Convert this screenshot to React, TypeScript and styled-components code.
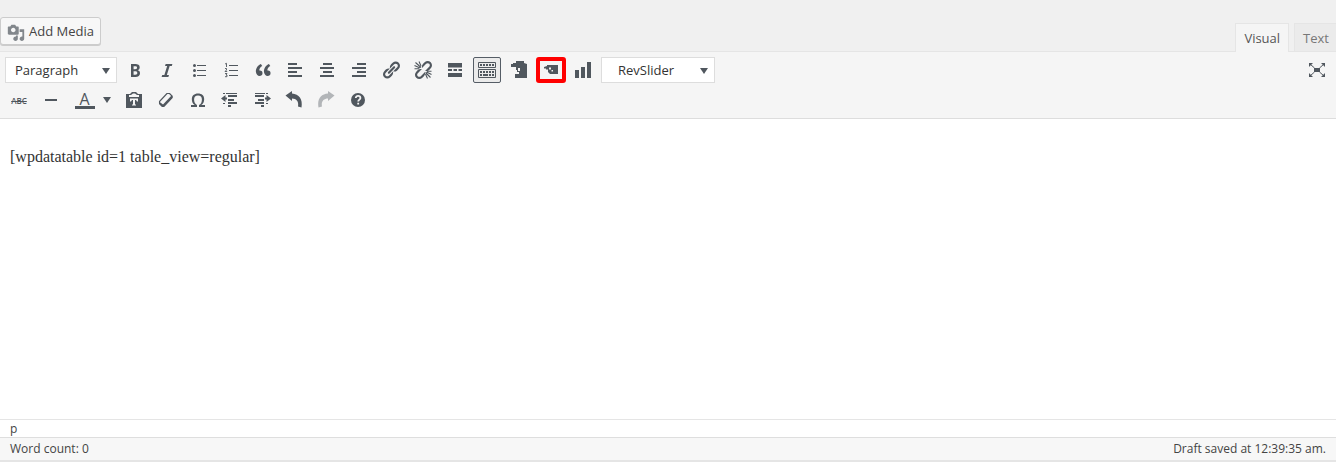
import React, { useState } from 'react';
import styled, { createGlobalStyle, css } from 'styled-components';

const Global = createGlobalStyle`
  * { box-sizing: border-box; }
  body { margin: 0; background: #f0f0f0; }
  button, select { font: inherit; }
`;

const Editor = styled.section`
  min-height: 100vh;
  display: flex;
  flex-direction: column;
  font-family: "Open Sans", "Noto Sans", sans-serif;
  font-size: 12px;
  color: #444;
`;

const Header = styled.header`
  display: flex;
  justify-content: space-between;
  align-items: flex-start;
  height: 52px;
  padding-top: 17px;
  border-bottom: 1px solid #e5e5e5;
`;

const MediaButton = styled.button`
  display: flex;
  align-items: center;
  gap: 3px;
  height: 28px;
  padding: 0 6px 0 5px;
  border: 1px solid #ccc;
  border-radius: 3px;
  background: #f7f7f7;
  box-shadow: 0 1px 0 #ccc;
  color: #444;
  font-size: 13px;
  cursor: pointer;
`;

const Tabs = styled.div`
  display: flex;
  gap: 5px;
  padding-top: 6px;
`;

const Tab = styled.button<{ $active?: boolean }>`
  height: ${p => (p.$active ? 29 : 28)}px;
  padding: 0 8px;
  border: 1px solid #e5e5e5;
  border-bottom: 0;
  background: ${p => (p.$active ? '#f5f5f5' : '#ebebeb')};
  color: ${p => (p.$active ? '#555' : '#777')};
  font-size: 13px;
  line-height: 26px;
  cursor: pointer;
  &:last-child { padding-right: 7px; border-right: 0; }
`;

const Toolbar = styled.div`
  display: flex;
  flex-direction: column;
  gap: 2px;
  padding: 4px 5px;
  background: #f5f5f5;
  border-bottom: 1px solid #ddd;
`;

const ToolRow = styled.div`
  display: flex;
  align-items: center;
  gap: 4px;
  height: 28px;
`;

const SelectBox = styled.div<{ $width: number; $indent: number }>`
  position: relative;
  width: ${p => p.$width}px;
  height: 26px;
  select {
    appearance: none;
    width: 100%;
    height: 100%;
    padding: 0 18px 0 ${p => p.$indent}px;
    border: 1px solid #ddd;
    border-radius: 0;
    background: #fff;
    color: #333;
    font-size: 13px;
  }
  svg { position: absolute; right: 7px; top: 11px; pointer-events: none; }
`;

const ToolButton = styled.button<{ $pressed?: boolean; $marked?: boolean; $wide?: boolean }>`
  display: flex;
  align-items: center;
  justify-content: center;
  flex: none;
  width: ${p => (p.$wide ? 47 : 28)}px;
  height: 28px;
  padding: 0;
  border: 0;
  border-radius: 2px;
  background: transparent;
  color: #50575e;
  cursor: pointer;
  &:disabled { opacity: 0.4; cursor: default; }
  ${p => p.$pressed && css`
    height: 26px;
    border: 1px solid #555d66;
    background: #ebebeb;
  `}
  ${p => p.$marked && css`
    height: 24px;
    outline: 4px solid #f00;
    outline-offset: -3px;
  `}
`;

const Spacer = styled.span`
  flex: 1;
`;

const Canvas = styled.main`
  flex: 1;
  padding: 26px 10px;
  background: #fff;
  color: #333;
  font: 16px/24px "Liberation Serif", serif;
  outline: 0;
  p { margin: 0; }
`;

const PathBar = styled.div`
  height: 18px;
  padding: 0 10px;
  border-top: 1px solid #e5e5e5;
  background: #fff;
  line-height: 18px;
`;

const StatusBar = styled.footer`
  display: flex;
  justify-content: space-between;
  height: 25px;
  padding: 0 10px;
  border-top: 1px solid #dedede;
  border-bottom: 2px solid #e5e5e5;
  background: #f7f7f7;
  line-height: 22px;
`;

const Svg = ({ children }: { children: React.ReactNode }) => (
  <svg width="20" height="20" viewBox="0 0 20 20" fill="currentColor" aria-hidden="true">{children}</svg>
);

const Arrow = () => (
  <svg width="8" height="6" viewBox="0 0 8 6" fill="#50575e" aria-hidden="true"><path d="M0 0h8L4 6z" /></svg>
);

const icons: Record<string, React.ReactNode> = {
  bold: <path d="M6 4v13h4.540c1.370 0 2.460-.33 3.260-1 .8-.66 1.200-1.580 1.200-2.770 0-.84-.17-1.510-.51-2.010s-.9-.85-1.670-1.030v-.09c.57-.1 1.020-.4 1.360-.9s.51-1.130.51-1.910c0-1.140-.39-1.980-1.170-2.500C12.750 4.260 11.500 4 9.780 4H6zm2.570 5.150V6.260h1.360c.73 0 1.270.11 1.610.32.34.22.51.58.51 1.070 0 .54-.16.92-.47 1.150s-.82.35-1.510.35h-1.500zm0 2.190h1.600c1.440 0 2.160.53 2.160 1.610 0 .6-.17 1.050-.51 1.340s-.86.43-1.570.43H8.570v-3.380z" />,
  italic: <path d="M14.780 6h-2.130l-2.800 9h2.120l-.62 2H4.600l.62-2h2.140l2.800-9H8.030l.62-2h6.750z" />,
  ul: <path d="M5.500 7a1.500 1.500 0 1 1 0-3 1.500 1.500 0 0 1 0 3zM8 5h9v1H8zM5.500 12a1.500 1.500 0 1 1 0-3 1.500 1.500 0 0 1 0 3zM8 10h9v1H8zM5.500 17a1.500 1.500 0 1 1 0-3 1.500 1.500 0 0 1 0 3zM8 15h9v1H8z" />,
  ol: (
    <>
      <path d="M8 5h9v1H8zM8 10h9v1H8zM8 15h9v1H8z" />
      <path d="M4 4L5.500 3.300V7M4 8.500h1.500v1.500L4 11.500h2.200M4 13.500h2L5 15h1v1.700H4" fill="none" stroke="currentColor" strokeWidth=".9" />
    </>
  ),
  quote: <path d="M9.490 13.220c0-.74-.2-1.380-.61-1.900-.62-.78-1.830-.88-2.530-.72-.29-1.650 1.110-3.750 2.920-4.650L7.880 4c-2.730 1.300-5.420 4.280-4.960 8.050C3.210 14.430 4.590 16 6.540 16c.85 0 1.560-.25 2.120-.75s.83-1.180.83-2.030zm8.050 0c0-.74-.2-1.380-.61-1.900-.63-.78-1.830-.88-2.530-.72-.29-1.650 1.110-3.750 2.920-4.650L15.930 4c-2.730 1.300-5.410 4.280-4.950 8.050.29 2.380 1.660 3.950 3.610 3.950.85 0 1.560-.25 2.120-.75s.83-1.180.83-2.030z" />,
  left: <path d="M3 3h9v2H3zM3 7h14v2H3zM3 11h9v2H3zM3 15h14v2H3z" />,
  center: <path d="M6 3h9v2H6zM3 7h14v2H3zM6 11h9v2H6zM3 15h14v2H3z" />,
  right: <path d="M8 3h9v2H8zM3 7h14v2H3zM8 11h9v2H8zM3 15h14v2H3z" />,
  link: <path d="M17.740 2.760c1.680 1.690 1.680 4.410 0 6.100l-1.530 1.520c-1.120 1.120-2.700 1.470-4.140 1.090l2.620-2.610.76-.77.76-.76c.84-.84.84-2.200 0-3.040-.84-.85-2.200-.85-3.040 0l-.77.76-3.380 3.380c-.37-1.440-.02-3.020 1.100-4.140l1.520-1.530c1.690-1.680 4.420-1.680 6.100 0zM8.590 13.430l5.340-5.340c.42-.42.42-1.100 0-1.520-.44-.43-1.130-.39-1.530 0l-5.330 5.340c-.42.42-.42 1.100 0 1.520.44.43 1.130.39 1.520 0zm-.76 2.290l4.140-4.150c.38 1.440.03 3.020-1.090 4.140l-1.520 1.530c-1.690 1.680-4.410 1.680-6.100 0-1.680-1.680-1.680-4.420 0-6.100l1.530-1.520c1.120-1.120 2.700-1.470 4.140-1.100l-4.140 4.150c-.85.84-.85 2.200 0 3.050.84.84 2.200.84 3.040 0z" />,
  unlink: (
    <>
      <path d="M17.740 2.260c1.680 1.690 1.680 4.410 0 6.100l-1.530 1.520c-1.120 1.120-2.700 1.470-4.140 1.090l2.620-2.610 1.520-1.530c.84-.84.84-2.200 0-3.040-.84-.85-2.200-.85-3.040 0l-.77.76-3.380 3.380c-.37-1.440-.02-3.020 1.100-4.140l1.520-1.530c1.690-1.680 4.420-1.680 6.100 0zM7.830 16.220l4.140-4.150c.38 1.440.03 3.020-1.090 4.140l-1.520 1.530c-1.690 1.680-4.410 1.680-6.100 0-1.680-1.680-1.680-4.420 0-6.100l1.530-1.520c1.120-1.120 2.700-1.470 4.140-1.100l-4.140 4.150c-.85.84-.85 2.200 0 3.050.84.84 2.200.84 3.040 0z" />
      <path d="M8 7.500L2.500 2.500M8 6L6 1.500M7 8L1.500 5.500M6 8.700H1.500M12.500 12.500l5 5M12.500 14l2 4.500M13.500 12l5 2.500M14 11.200h4.500" fill="none" stroke="currentColor" strokeWidth="1.100" />
    </>
  ),
  more: <path d="M3 3h14v4.500H3zM3 9h4v2H3zM8.500 9h3.500v2H8.500zM13.500 9H17v2h-3.500zM3 13h14v4H3z" />,
  kitchen: (
    <>
      <path d="M1.500 2.500h17v5h-17zM1.500 9.500h17v8h-17z" fill="none" stroke="currentColor" />
      <path d="M3 4h2v2H3zM6 4h2v2H6zM9 4h2v2H9zM12 4h2v2h-2zM15 4h2v2h-2zM3 11h2v2H3zM6 11h2v2H6zM9 11h2v2H9zM12 11h2v2h-2zM15 11h2v2h-2zM3 14h2v2H3zM6 14h5v2H6zM12 14h2v2h-2zM15 14h2v2h-2z" />
    </>
  ),
  page: <path fillRule="evenodd" d="M7 1h8v2l3 1v14H6v-4h4v-2H8v-2H7V7H2V4h2V3h3zM9 8v3h2V8z" />,
  tag: <path fillRule="evenodd" d="M6 5h11v9H9l-2-2V9.500H5V8.500H3V7l3-1zM8 7.500v2h2v-2zM10.500 10v1.500H12V10z" />,
  chart: <path d="M2 10h4v8H2zM8 7h4v11H8zM14 2h4v16h-4z" />,
  expand: (
    <>
      <path d="M7 8h6v4H7zM2 3h4L2 7zM18 3v4l-4-4zM2 17v-4l4 4zM18 17h-4l4-4z" />
      <path d="M3 4l4.500 4M17 4l-4.500 4M3 16l4.500-4M17 16l-4.500-4" fill="none" stroke="currentColor" />
    </>
  ),
  hr: <path d="M4 9h12v2H4z" />,
  paste: (
    <path fillRule="evenodd" d="M2 4h4L8 2h4l2 2h4v14H2zM5 5v2h10V5h-2l-2-1.500H9L7 5zM6 8.500v3h1l1-1.500h1v4.500H8v1h4v-1h-1V10h1l1 1.500h1v-3z" />
  ),
  eraser: (
    <>
      <path d="M11 3.500h2.500L16 6v1.500L8 16H6.500L3.500 13v-1.500z" fill="none" stroke="currentColor" strokeWidth="1.100" strokeLinejoin="round" />
      <path d="M3 11.500l4 3L15.500 5.500l1 .5v2L8 17H6l-3-3z" />
    </>
  ),
  omega: <path d="M10 5.400c1.270 0 2.240.36 2.910 1.080.66.71 1 1.760 1 3.130 0 1.280-.23 2.370-.69 3.270-.47.89-1.270 1.520-2.220 2.120v2h6v-2h-3.690c.92-.64 1.620-1.340 2.120-2.340.49-1.010.74-2.130.74-3.350 0-1.780-.55-3.190-1.650-4.220S11.920 3.540 10 3.540s-3.430.53-4.520 1.570c-1.100 1.040-1.650 2.440-1.650 4.200 0 1.210.24 2.310.73 3.330.48 1.010 1.190 1.710 2.100 2.360H3v2h6v-2c-.98-.64-1.800-1.280-2.240-2.170-.45-.89-.67-1.960-.67-3.220 0-1.370.33-2.410 1-3.130C7.750 5.760 8.720 5.400 10 5.400z" />,
  outdent: <path d="M3 3h2v1H3zM6 3h11v1H6zM1 8.500L5.500 5v2.500H7v2H5.500V12zM8 5h9v2H8zM8 9h6v2H8zM8 12h9v2H8zM3 13h2v1H3zM8 15h3v2H8z" />,
  indent: <path d="M3 3h10v1H3zM14 3h2v1h-2zM19 8.500L14.500 5v2.500H13v2h1.500V12zM3 5h9v2H3zM6 9h6v2H6zM3 12h9v2H3zM14 13h2v1h-2zM9 15h3v2H9z" />,
  undo: <path d="M8 1v2.500c7 .5 11 5.500 9.500 14l-3.500-1c1-5-1.500-8-6-8V11L1.500 5.500z" />,
  redo: <path d="M12 1v2.500C5 4 1 9 2.500 17.500l3.500-1c-1-5 1.500-8 6-8V11l6.500-5.500z" />,
  help: (
    <>
      <circle cx="10" cy="10" r="7" />
      <path d="M7.800 8c0-3 4.600-2.800 4.600 0 0 1.600-2.200 1.600-2.200 3.500M10.200 12.700v1.800" fill="none" stroke="#f5f5f5" strokeWidth="1.800" />
    </>
  ),
};

const MediaIcon = () => (
  <svg width="20" height="20" viewBox="-1 -3 22 22" fill="#82878c" aria-hidden="true">
    <path d="M13 11V4c0-.55-.45-1-1-1h-1.670L9 1H5L3.670 3H2c-.55 0-1 .45-1 1v7c0 .55.45 1 1 1h10c.55 0 1-.45 1-1zM7 4.500c1.380 0 2.500 1.120 2.500 2.500S8.380 9.500 7 9.500 4.500 8.380 4.500 7 5.620 4.500 7 4.500zM14 6h5v10.500c0 1.380-1.120 2.500-2.500 2.500S14 17.880 14 16.500s1.120-2.500 2.500-2.500c.17 0 .34.020.5.050V9h-3V6zm-4 8.050V13h2v3.500c0 1.380-1.120 2.500-2.500 2.500S7 17.880 7 16.500 8.120 14 9.500 14c.17 0 .34.020.5.050z" />
  </svg>
);

const ColorLetter = styled.span`
  display: flex;
  justify-content: center;
  width: 20px;
  height: 18px;
  margin-right: 8px;
  border-bottom: 3px solid #50575e;
  font-size: 16px;
  line-height: 16px;
`;

const StrikeLabel = styled.span`
  font-size: 8px;
  font-weight: 600;
  text-decoration: line-through;
`;

const row1: [string, string][] = [
  ['bold', 'Bold'], ['italic', 'Italic'], ['ul', 'Bulleted list'], ['ol', 'Numbered list'], ['quote', 'Blockquote'],
  ['left', 'Align left'], ['center', 'Align center'], ['right', 'Align right'], ['link', 'Insert link'], ['unlink', 'Remove link'],
  ['more', 'Read more tag'], ['kitchen', 'Toolbar toggle'], ['page', 'Insert table page'], ['tag', 'Insert wpDataTable'], ['chart', 'Insert chart'],
];

const row2: [string, string][] = [
  ['paste', 'Paste as text'], ['eraser', 'Clear formatting'], ['omega', 'Special character'], ['outdent', 'Decrease indent'],
  ['indent', 'Increase indent'], ['undo', 'Undo'], ['redo', 'Redo'], ['help', 'Keyboard shortcuts'],
];

export default function App() {
  const [kitchen, setKitchen] = useState(true);
  return (
    <Editor>
      <Global />
      <Header>
        <MediaButton><MediaIcon />Add Media</MediaButton>
        <Tabs>
          <Tab $active>Visual</Tab>
          <Tab>Text</Tab>
        </Tabs>
      </Header>
      <Toolbar>
        <ToolRow>
          <SelectBox $width={112} $indent={9}>
            <select aria-label="Format"><option>Paragraph</option></select>
            <Arrow />
          </SelectBox>
          {row1.map(([id, label]) => (
            <ToolButton
              key={id}
              aria-label={label}
              $pressed={id === 'kitchen' && kitchen}
              $marked={id === 'tag'}
              onClick={id === 'kitchen' ? () => setKitchen(!kitchen) : undefined}
            >
              <Svg>{icons[id]}</Svg>
            </ToolButton>
          ))}
          <SelectBox $width={114} $indent={16}>
            <select aria-label="Slider"><option>RevSlider</option></select>
            <Arrow />
          </SelectBox>
          <Spacer />
          <ToolButton aria-label="Fullscreen"><Svg>{icons.expand}</Svg></ToolButton>
        </ToolRow>
        {kitchen && (
          <ToolRow>
            <ToolButton aria-label="Strikethrough"><StrikeLabel>ABC</StrikeLabel></ToolButton>
            <ToolButton aria-label="Horizontal line"><Svg>{icons.hr}</Svg></ToolButton>
            <ToolButton aria-label="Text color" $wide><ColorLetter>A</ColorLetter><Arrow /></ToolButton>
            {row2.map(([id, label]) => (
              <ToolButton key={id} aria-label={label} disabled={id === 'redo'}><Svg>{icons[id]}</Svg></ToolButton>
            ))}
          </ToolRow>
        )}
      </Toolbar>
      <Canvas contentEditable suppressContentEditableWarning>
        <p>[wpdatatable id=1 table_view=regular]</p>
      </Canvas>
      <PathBar>p</PathBar>
      <StatusBar>
        <span>Word count: 0</span>
        <span>Draft saved at 12:39:35 am.</span>
      </StatusBar>
    </Editor>
  );
}
